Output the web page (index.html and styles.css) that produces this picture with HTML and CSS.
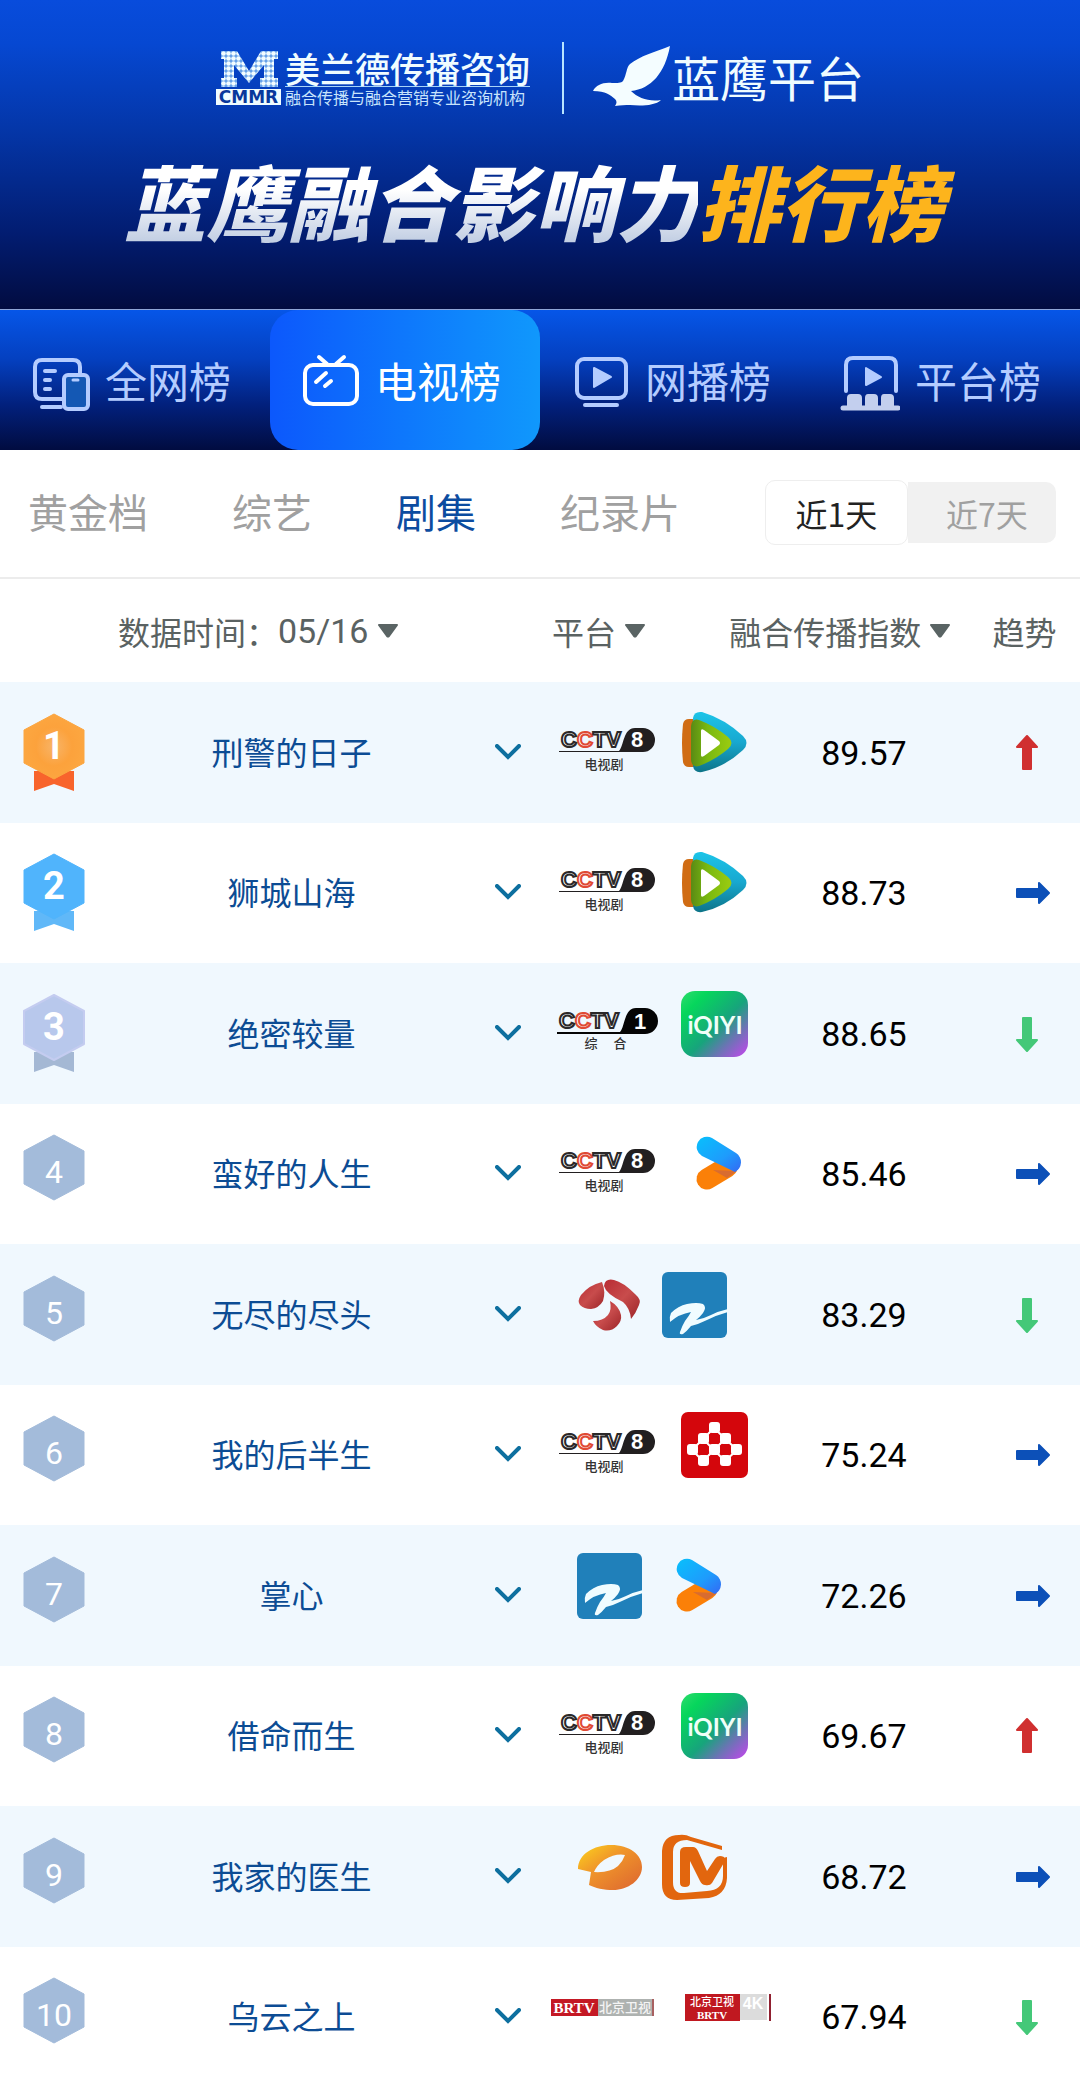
FILE: index.html
```html
<!DOCTYPE html>
<html lang="zh-CN">
<head>
<meta charset="utf-8">
<meta name="viewport" content="width=device-width, initial-scale=1">
<title>蓝鹰融合影响力排行榜</title>
<link rel="stylesheet" href="styles.css">
</head>
<body>
<svg class="defs" width="0" height="0" aria-hidden="true">
  <defs>
    <linearGradient id="g-qiyi" x1="0" y1="0" x2="1" y2="1"><stop offset="0" stop-color="#2fdc6c"/><stop offset=".2" stop-color="#06d65c"/><stop offset=".55" stop-color="#17a47c"/><stop offset=".75" stop-color="#6b74b4"/><stop offset="1" stop-color="#c844f0"/></linearGradient>
    <linearGradient id="g-tx-blue" x1="0" y1="0" x2="0" y2="1"><stop offset="0" stop-color="#1cc4e8"/><stop offset=".5" stop-color="#18a8d0"/><stop offset="1" stop-color="#0d7488"/></linearGradient>
    <linearGradient id="g-tx-green" x1="0" y1="0" x2="1" y2="0"><stop offset="0" stop-color="#5a8a14"/><stop offset=".4" stop-color="#78b810"/><stop offset="1" stop-color="#9ccc10"/></linearGradient>
    <linearGradient id="g-yk-blue" x1="0" y1="0" x2="1" y2="1"><stop offset="0" stop-color="#08c0fc"/><stop offset=".6" stop-color="#1e9cfc"/><stop offset="1" stop-color="#3468f4"/></linearGradient>
    <linearGradient id="g-hunan" x1="0" y1="0" x2="1" y2="1"><stop offset="0" stop-color="#fcd41c"/><stop offset=".4" stop-color="#f0962a"/><stop offset="1" stop-color="#dc6430"/></linearGradient>
    <linearGradient id="g-js" x1="0" y1="0" x2="1" y2="1"><stop offset="0" stop-color="#b82c34"/><stop offset=".5" stop-color="#c84c4c"/><stop offset="1" stop-color="#9c2428"/></linearGradient>
    <radialGradient id="g-gold"><stop offset="0" stop-color="#f8b468"/><stop offset=".6" stop-color="#fca23c"/><stop offset="1" stop-color="#fca640"/></radialGradient>
    <pattern id="dots" width="5" height="5" patternUnits="userSpaceOnUse"><rect width="5" height="5" fill="#5b9ae8"/><circle cx="2.500" cy="2.500" r="2.300" fill="#f2fdff"/></pattern>
  </defs>
  <symbol id="hex" viewBox="0 0 62 80"><path d="M31 1 61 17V50L31 66 1 50V17Z" fill="#a3bbda" stroke="#a3bbda" stroke-linejoin="round"/></symbol>
  <symbol id="chevron" viewBox="0 0 26 16"><path d="M2 2 13 13 24 2" fill="none" stroke="#0d6f9f" stroke-width="4" stroke-linecap="round"/></symbol>
  <symbol id="caret" viewBox="0 0 22 14"><path d="M2 1H20L12 12Q11 13 10 12Z" fill="#5a6464" stroke="#5a6464" stroke-width="2" stroke-linejoin="round"/></symbol>
  <symbol id="up" viewBox="0 0 36 36"><path d="M12 1 22 12H16V34H8V12H2Z" fill="#d03030" stroke="#d03030" stroke-width="2" stroke-linejoin="round"/></symbol>
  <symbol id="down" viewBox="0 0 36 36"><path d="M12 35 2 24H8V2H16V24H22Z" fill="#44c878" stroke="#44c878" stroke-width="2" stroke-linejoin="round"/></symbol>
  <symbol id="flat" viewBox="0 0 36 36"><path d="M34 18 24 8V14H2V22H24V28Z" fill="#0c50b8" stroke="#0c50b8" stroke-width="2" stroke-linejoin="round"/></symbol>
  <symbol id="plate8" viewBox="0 0 106 66"><path d="M2 41H62C67 36 66 18 78 18H86A11.500 11.500 0 0 1 86 42H2Z" fill="#221f20"/></symbol>
  <symbol id="plate1" viewBox="0 0 106 66"><path d="M0 41H63C68 36 67 17 79 17H88A12 12 0 0 1 88 43H0Z" fill="#050505"/></symbol>
  <symbol id="tencent" viewBox="0 0 67 66">
    <path d="M2 14Q3 9 8 9H18V57H8Q3 57 2 52Q0 33 2 14Z" fill="#d06c14"/>
    <path d="M12 8Q13 1 21 2Q44 9 62 26Q69 33 62 40Q44 57 21 62Q13 63 12 56Z" fill="url(#g-tx-blue)"/>
    <path d="M10 16Q11 8 18 10Q34 16 47 27Q54 33 47 39Q34 50 18 56Q11 58 10 50Z" fill="url(#g-tx-green)"/>
    <path d="M20 21Q20 18 23 20L38 31Q40 33 38 35L23 46Q20 48 20 45Z" fill="#fff"/>
  </symbol>
  <symbol id="qiyi-tile" viewBox="0 0 67 66"><rect width="67" height="66" rx="14" fill="url(#g-qiyi)"/></symbol>
  <symbol id="youku" viewBox="0 0 67 66">
    <path d="M26 48 46 36" stroke="#fb8008" stroke-width="21" stroke-linecap="round"/>
    <path d="M32 39 56 40 46 47Z" fill="#d86c30"/>
    <path d="M31 7 55 22A11 11 0 0 1 54 41L21 25A10 10 0 0 1 31 7Z" fill="url(#g-yk-blue)"/>
  </symbol>
  <symbol id="zhejiang" viewBox="0 0 67 66"><rect x="1" width="65" height="66" rx="6" fill="#2080ba"/><path d="M9 50Q8 45 10 41Q17 34 26 32Q36 30 42 32Q46 35 42 41Q39 45 35 48Q42 47 50 43Q58 39 67 37V40Q56 43 46 48Q38 52 30 54Q26 59 22 62Q18 63 19 60Q21 54 24 49Q28 44 30 40Q18 42 9 50Z" fill="#f0fcff"/></symbol>
  <symbol id="jiangsu" viewBox="0 0 67 66" fill="url(#g-js)"><path d="M26 10Q30 20 27 29Q23 36 15 37Q8 37 4 33Q1 29 5 23Q13 13 26 10Z"/><path d="M28 14Q29 6 38 8Q47 10 59 22Q66 28 63 33Q60 41 55 47Q54 36 47 30Q30 22 28 14Z"/><path d="M34 29Q43 34 45 43Q46 49 41 54Q35 60 27 58Q20 55 17 49Q27 49 32 43Q36 38 34 29Z"/></symbol>
  <symbol id="cmgt" viewBox="0 0 67 66"><rect width="67" height="66" rx="7" fill="#d4060c"/><path d="M33 16 11 38 22 49 33 38 22 27M33 16 56 38 44 49 33 38 44 27" stroke="#fff" stroke-width="2" fill="none"/><g fill="#fff"><rect x="28" y="10" width="11" height="11" rx="3"/><rect x="17" y="21" width="11" height="11" rx="3"/><rect x="39" y="21" width="11" height="11" rx="3"/><rect x="6" y="32" width="11" height="11" rx="3"/><rect x="28" y="32" width="11" height="11" rx="3"/><rect x="50" y="32" width="11" height="11" rx="3"/><rect x="17" y="43" width="11" height="11" rx="3"/><rect x="39" y="43" width="11" height="11" rx="3"/></g></symbol>
</svg>

<header class="hero">
  <div class="brands">
    <div class="brand">
      <div class="mark">
        <svg width="65" height="37" viewBox="0 0 65 37" aria-hidden="true"><path d="M5 0H21L33 20 45 0H62V8H58V27H62V36H44V27H48V14L33 32 18 14V27H21V36H5V27H8V8H5Z" fill="url(#dots)"/></svg>
        <span class="mark-name">CMMR</span>
      </div>
      <div class="brand-text">
        <span class="brand-name">美兰德传播咨询</span>
        <span class="brand-sub">融合传播与融合营销专业咨询机构</span>
      </div>
    </div>
    <div class="brand eagle">
      <svg width="77" height="62" viewBox="0 0 77 62" aria-hidden="true"><path d="M77 1C72 28 58 44 38 46C45 53 56 57 68 55C62 61 47 61 37 60C32 60 28 60 22 61Q25 57 22 54C17 50 13 46 0 46C3 40 10 37 19 38C25 38 28 38 30 36C34 29 33 23 37 19C47 11 62 7 77 1Z" fill="#f4fdff"/></svg>
      <span class="eagle-name">蓝鹰平台</span>
    </div>
  </div>
  <h1 class="title"><span class="title-main">蓝鹰融合影响力</span><span class="title-rank">排行榜</span></h1>
</header>

<nav class="boards" aria-label="榜单">
  <a class="board" href="#all"><svg width="60" height="64" viewBox="0 0 60 64" fill="none" stroke="currentColor" stroke-width="4" stroke-linecap="round"><path d="M32 52H12Q5 52 5 45V20Q5 13 12 13H43Q50 13 50 20V26M15 24H25M15 33H20M15 42H20M12 60H31"/><rect x="34" y="28" width="24" height="34" rx="4" fill="#1458b4"/><path d="M43 33H48" stroke-width="3"/></svg>全网榜</a>
  <a class="board active" href="#tv" aria-current="page"><svg width="60" height="64" viewBox="0 0 60 64" fill="none" stroke="currentColor" stroke-width="4" stroke-linecap="round"><rect x="5" y="18" width="52" height="39" rx="8"/><path d="M19 10 27 17M44 10 36 17M26 26 16 35M31 34 25 39"/></svg>电视榜</a>
  <a class="board" href="#web"><svg width="60" height="64" viewBox="0 0 60 64" fill="none" stroke="currentColor" stroke-width="4" stroke-linecap="round"><rect x="7" y="12" width="49" height="39" rx="7"/><path d="M15 58H47"/><path d="M24 21V40L41 30Z" fill="currentColor" stroke-width="2" stroke-linejoin="round"/></svg>网播榜</a>
  <a class="board" href="#platform"><svg width="60" height="64" viewBox="0 0 60 64" fill="none" stroke="currentColor" stroke-width="4" stroke-linecap="round"><path d="M6 44V18Q6 11 13 11H49Q56 11 56 18V44"/><path d="M26 21V38L41 30Z" fill="currentColor" stroke-width="2" stroke-linejoin="round"/><path d="M8 61V51Q8 48 11 48H18Q21 48 21 51V61M26 61V51Q26 48 28 48H34Q37 48 37 51V61M42 61V51Q42 48 44 48H50Q53 48 53 51V61" fill="#c3cfee" stroke="#c3cfee" stroke-width="2"/><path d="M3 61H58" stroke="#c3cfee" stroke-width="5"/></svg>平台榜</a>
</nav>

<div class="filters">
  <nav class="genres" aria-label="类型">
    <a href="#prime">黄金档</a>
    <a href="#variety">综艺</a>
    <a href="#drama" class="active" aria-current="page">剧集</a>
    <a href="#documentary">纪录片</a>
  </nav>
  <div class="range">
    <button type="button" class="active" aria-pressed="true">近1天</button>
    <button type="button" aria-pressed="false">近7天</button>
  </div>
</div>

<table class="ranking">
  <colgroup><col class="c-rank"><col class="c-title"><col class="c-more"><col class="c-platform"><col class="c-index"><col class="c-trend"></colgroup>
  <thead>
    <tr>
      <th colspan="3"><div class="head date"><label for="date">数据时间：</label><select id="date"><option>05/16</option></select><svg width="22" height="14" aria-hidden="true"><use href="#caret"/></svg></div></th>
      <th><button type="button" class="head platform">平台<svg width="22" height="14"><use href="#caret"/></svg></button></th>
      <th><div class="head-end"><button type="button" class="head">融合传播指数<svg width="22" height="14"><use href="#caret"/></svg></button></div></th>
      <th class="trend-head">趋势</th>
    </tr>
  </thead>
  <tbody>
    <tr>
      <td><svg class="rank" width="62" height="80" viewBox="0 0 62 80"><path d="M11 58H51V78L31 71 11 78Z" fill="#f8642c"/><path d="M31 1 61 17V50L31 66 1 50V17Z" fill="url(#g-gold)" stroke="#fca640" stroke-linejoin="round"/><text class="medal" x="31" y="46">1</text></svg></td>
      <td class="name"><a href="#d1">刑警的日子</a></td>
      <td><button type="button" class="more" aria-label="展开"><svg width="26" height="16"><use href="#chevron"/></svg></button></td>
      <td><div class="logos"><svg width="106" height="66"><text class="cctv-word" x="4" y="37">C<tspan class="cctv-red">C</tspan>TV</text><use href="#plate8"/><text class="cctv-num" x="80" y="37">8</text><text class="cctv-name" x="47" y="59">电视剧</text></svg><svg width="67" height="66"><use href="#tencent"/></svg></div></td>
      <td class="index">89.57</td>
      <td class="trend"><svg width="36" height="36" role="img" aria-label="上升"><use href="#up"/></svg></td>
    </tr>
    <tr>
      <td><svg class="rank" width="62" height="80" viewBox="0 0 62 80"><path d="M11 58H51V78L31 71 11 78Z" fill="#60b8f8"/><path d="M31 1 61 17V50L31 66 1 50V17Z" fill="#50b4fc" stroke="#50b4fc" stroke-linejoin="round"/><text class="medal" x="31" y="46">2</text></svg></td>
      <td class="name"><a href="#d2">狮城山海</a></td>
      <td><button type="button" class="more" aria-label="展开"><svg width="26" height="16"><use href="#chevron"/></svg></button></td>
      <td><div class="logos"><svg width="106" height="66"><text class="cctv-word" x="4" y="37">C<tspan class="cctv-red">C</tspan>TV</text><use href="#plate8"/><text class="cctv-num" x="80" y="37">8</text><text class="cctv-name" x="47" y="59">电视剧</text></svg><svg width="67" height="66"><use href="#tencent"/></svg></div></td>
      <td class="index">88.73</td>
      <td class="trend"><svg width="36" height="36" role="img" aria-label="持平"><use href="#flat"/></svg></td>
    </tr>
    <tr>
      <td><svg class="rank" width="62" height="80" viewBox="0 0 62 80"><path d="M11 58H51V78L31 71 11 78Z" fill="#a4b8d4"/><path d="M31 1 61 17V50L31 66 1 50V17Z" fill="#b8c8ec" stroke="#c4ccf0" stroke-width="2" stroke-linejoin="round"/><text class="medal" x="31" y="46">3</text></svg></td>
      <td class="name"><a href="#d3">绝密较量</a></td>
      <td><button type="button" class="more" aria-label="展开"><svg width="26" height="16"><use href="#chevron"/></svg></button></td>
      <td><div class="logos"><svg width="106" height="66"><text class="cctv-word" x="2" y="37">C<tspan class="cctv-red">C</tspan>TV</text><use href="#plate1"/><text class="cctv-num" x="83" y="38">1</text><text class="cctv-name" x="34" y="57">综</text><text class="cctv-name" x="63" y="57">合</text></svg><svg width="67" height="66"><use href="#qiyi-tile"/><text class="qiyi" x="34" y="43">iQIYI</text></svg></div></td>
      <td class="index">88.65</td>
      <td class="trend"><svg width="36" height="36" role="img" aria-label="下降"><use href="#down"/></svg></td>
    </tr>
    <tr>
      <td><svg class="rank" width="62" height="80"><use href="#hex"/><text class="num" x="31" y="49">4</text></svg></td>
      <td class="name"><a href="#d4">蛮好的人生</a></td>
      <td><button type="button" class="more" aria-label="展开"><svg width="26" height="16"><use href="#chevron"/></svg></button></td>
      <td><div class="logos"><svg width="106" height="66"><text class="cctv-word" x="4" y="37">C<tspan class="cctv-red">C</tspan>TV</text><use href="#plate8"/><text class="cctv-num" x="80" y="37">8</text><text class="cctv-name" x="47" y="59">电视剧</text></svg><svg width="67" height="66"><use href="#youku"/></svg></div></td>
      <td class="index">85.46</td>
      <td class="trend"><svg width="36" height="36" role="img" aria-label="持平"><use href="#flat"/></svg></td>
    </tr>
    <tr>
      <td><svg class="rank" width="62" height="80"><use href="#hex"/><text class="num" x="31" y="49">5</text></svg></td>
      <td class="name"><a href="#d5">无尽的尽头</a></td>
      <td><button type="button" class="more" aria-label="展开"><svg width="26" height="16"><use href="#chevron"/></svg></button></td>
      <td><div class="logos"><svg width="67" height="66"><use href="#jiangsu"/></svg><svg width="67" height="66"><use href="#zhejiang"/></svg></div></td>
      <td class="index">83.29</td>
      <td class="trend"><svg width="36" height="36" role="img" aria-label="下降"><use href="#down"/></svg></td>
    </tr>
    <tr>
      <td><svg class="rank" width="62" height="80"><use href="#hex"/><text class="num" x="31" y="49">6</text></svg></td>
      <td class="name"><a href="#d6">我的后半生</a></td>
      <td><button type="button" class="more" aria-label="展开"><svg width="26" height="16"><use href="#chevron"/></svg></button></td>
      <td><div class="logos"><svg width="106" height="66"><text class="cctv-word" x="4" y="37">C<tspan class="cctv-red">C</tspan>TV</text><use href="#plate8"/><text class="cctv-num" x="80" y="37">8</text><text class="cctv-name" x="47" y="59">电视剧</text></svg><svg width="67" height="66"><use href="#cmgt"/></svg></div></td>
      <td class="index">75.24</td>
      <td class="trend"><svg width="36" height="36" role="img" aria-label="持平"><use href="#flat"/></svg></td>
    </tr>
    <tr>
      <td><svg class="rank" width="62" height="80"><use href="#hex"/><text class="num" x="31" y="49">7</text></svg></td>
      <td class="name"><a href="#d7">掌心</a></td>
      <td><button type="button" class="more" aria-label="展开"><svg width="26" height="16"><use href="#chevron"/></svg></button></td>
      <td><div class="logos"><svg width="67" height="66"><use href="#zhejiang"/></svg><svg width="67" height="66"><use href="#youku"/></svg></div></td>
      <td class="index">72.26</td>
      <td class="trend"><svg width="36" height="36" role="img" aria-label="持平"><use href="#flat"/></svg></td>
    </tr>
    <tr>
      <td><svg class="rank" width="62" height="80"><use href="#hex"/><text class="num" x="31" y="49">8</text></svg></td>
      <td class="name"><a href="#d8">借命而生</a></td>
      <td><button type="button" class="more" aria-label="展开"><svg width="26" height="16"><use href="#chevron"/></svg></button></td>
      <td><div class="logos"><svg width="106" height="66"><text class="cctv-word" x="4" y="37">C<tspan class="cctv-red">C</tspan>TV</text><use href="#plate8"/><text class="cctv-num" x="80" y="37">8</text><text class="cctv-name" x="47" y="59">电视剧</text></svg><svg width="67" height="66"><use href="#qiyi-tile"/><text class="qiyi" x="34" y="43">iQIYI</text></svg></div></td>
      <td class="index">69.67</td>
      <td class="trend"><svg width="36" height="36" role="img" aria-label="上升"><use href="#up"/></svg></td>
    </tr>
    <tr>
      <td><svg class="rank" width="62" height="80"><use href="#hex"/><text class="num" x="31" y="49">9</text></svg></td>
      <td class="name"><a href="#d9">我家的医生</a></td>
      <td><button type="button" class="more" aria-label="展开"><svg width="26" height="16"><use href="#chevron"/></svg></button></td>
      <td><div class="logos"><svg width="67" height="66" viewBox="0 0 67 66"><path fill-rule="evenodd" fill="url(#g-hunan)" d="M2 35C2 20 18 11 35 11C54 11 66 21 66 33C66 46 52 56 37 56C28 56 19 54 13 51L15 38ZM18 38Q34 39 42 32Q47 27 49 21Q40 19 28 26Q21 31 18 38Z"/></svg><svg width="67" height="66" viewBox="0 0 67 66"><g fill="#e2660e"><path d="M61 12V16L26 6Q12 6 12 18V48Q12 60 23 59L46 57Q62 56 62 42V24L66 23V44Q65 61 48 64L16 66Q1 66 1 50V17Q2 1 18 1Q24 0 30 3Z"/><path d="M19 18Q19 13 25 13H32Q35 13 37 17L46 37 54 25Q57 20 63 23L64 27 51 49Q49 52 44 51Q41 51 39 47L29 27V49Q29 53 24 53Q19 53 19 49Z"/></g></svg></div></td>
      <td class="index">68.72</td>
      <td class="trend"><svg width="36" height="36" role="img" aria-label="持平"><use href="#flat"/></svg></td>
    </tr>
    <tr>
      <td><svg class="rank" width="62" height="80"><use href="#hex"/><text class="num" x="31" y="49">10</text></svg></td>
      <td class="name"><a href="#d10">乌云之上</a></td>
      <td><button type="button" class="more" aria-label="展开"><svg width="26" height="16"><use href="#chevron"/></svg></button></td>
      <td><div class="logos"><svg width="106" height="66" viewBox="0 0 106 66"><path d="M1 25H48V42H1Z" fill="#c41824"/><path d="M48 25H104V42H48Z" fill="#aeb2b0"/><path d="M102 25H104V42H102Z" fill="#a86060"/><text class="brtv" x="24" y="39">BRTV</text><text class="brtv-cn" x="75" y="38">北京卫视</text></svg><svg width="98" height="66" viewBox="0 0 98 66"><path d="M11 20H66V47H11Z" fill="#c01820"/><path d="M66 20H93V46H66Z" fill="#dcdcdc"/><path d="M95 20H97V47H95Z" fill="#902030"/><text class="brtv-top" x="38" y="32">北京卫视</text><text class="brtv-sm" x="38" y="45">BRTV</text><text class="fourk" x="79" y="35">4K</text></svg></div></td>
      <td class="index">67.94</td>
      <td class="trend"><svg width="36" height="36" role="img" aria-label="下降"><use href="#down"/></svg></td>
    </tr>
  </tbody>
</table>
</body>
</html>
```
FILE: styles.css
```css
* { box-sizing: border-box; }

body {
  margin: 0;
  padding-bottom: 8px;
  background: #fff;
  color: #000;
  font-family: Roboto, "Noto Sans CJK SC", sans-serif;
  font-size: 32px;
}

a { color: inherit; text-decoration: none; }

button, select {
  margin: 0;
  padding: 0;
  border: 0;
  background: none;
  color: inherit;
  font: inherit;
}

svg { display: block; flex: none; }
.defs { position: absolute; }

/* Banner */
.hero {
  display: flex;
  flex-direction: column;
  align-items: center;
  height: 310px;
  padding-top: 42px;
  border-bottom: 1px solid #8fa6d8;
  background: linear-gradient(#084cdc, #0648d2 14%, #0436a8 42%, #021c70 76%, #020c40);
  color: #f0fcff;
}

.brands { display: flex; height: 72px; }
.brand { display: flex; align-items: center; gap: 4px; padding-right: 32px; }
.brand.eagle { gap: 2px; padding: 0 0 4px 29px; border-left: 2px solid #b8e4ff; }

.mark { display: flex; flex-direction: column; gap: 1px; }
.mark-name {
  background: #f0fcff;
  color: #08389c;
  font: bold 17px/16px "DejaVu Sans", sans-serif;
  text-align: center;
}

.brand-text { display: flex; flex-direction: column; font-family: "Noto Sans CJK SC", sans-serif; }
.brand-name { border-bottom: 1px solid #a8d4f8; font-size: 35px; font-weight: 500; line-height: 37px; }
.brand-sub { color: #c8e4fc; font-size: 16px; line-height: 20px; }
.eagle-name { font: 48px/60px "Noto Sans CJK SC", sans-serif; }

.title {
  display: flex;
  margin: 36px 0 0;
  padding-right: 12px;
  font: italic 900 82px/100px "Noto Sans CJK SC", sans-serif;
}
.title-main {
  background: linear-gradient(#fff 40%, #c4d0e4 90%);
  background-clip: text;
  -webkit-background-clip: text;
  color: transparent;
}
.title-rank { color: #fdb41c; }

/* Board tabs */
.boards {
  display: grid;
  grid-template-columns: repeat(4, 1fr);
  height: 140px;
  background: linear-gradient(#0656e8, #0440c0 35%, #02207c 68%, #010c40);
  color: #b4ccff;
}
.board {
  display: flex;
  align-items: center;
  gap: 15px;
  padding: 0 0 2px 30px;
  font-size: 42px;
  white-space: nowrap;
}
.board.active {
  border-radius: 28px;
  background: linear-gradient(90deg, #0c58fc, #1098fc);
  color: #fff;
}

/* Genre and time range filters */
.filters {
  display: flex;
  justify-content: space-between;
  align-items: center;
  height: 129px;
  padding: 0 24px 2px 28px;
  border-bottom: 2px solid #ececec;
}
.genres { display: flex; gap: 84px; padding-bottom: 4px; color: #a0a0a0; font-size: 40px; white-space: nowrap; }
.genres .active { color: #0c4ca0; }

.range { display: flex; align-items: center; font-family: "Noto Sans CJK SC", sans-serif; }
.range button {
  width: 148px;
  height: 61px;
  padding-left: 10px;
  border-radius: 0 10px 10px 0;
  background: #f1f1f1;
  color: #a0a0a0;
}
.range .active {
  width: 143px;
  height: 65px;
  padding: 0;
  border: 1px solid #eee;
  border-radius: 10px;
  background: #fff;
  color: #222;
}

/* Ranking table */
.ranking { width: 100%; border-collapse: collapse; table-layout: fixed; }
.c-rank { width: 10%; }
.c-title { width: 34%; }
.c-more { width: 6%; }
.c-platform { width: 21%; }
.c-index { width: 18%; }
.c-trend { width: 11%; }

.ranking th, .ranking td { padding: 0; text-align: center; vertical-align: middle; }
.ranking th { height: 103px; color: #5a6262; font-weight: 400; white-space: nowrap; }
.head { display: inline-flex; align-items: center; gap: 8px; white-space: nowrap; }
.head.date { display: flex; padding-left: 118px; }
.date label { margin-right: -8px; }
.date select { appearance: none; font-size: 34px; }
.head.platform { display: flex; padding-left: 12px; }
.head-end { display: flex; justify-content: flex-end; padding-right: 10px; }
.ranking .trend-head { padding-left: 8px; }

.ranking tbody tr { height: 140px; color: #0c4c94; }
.ranking tbody tr:nth-child(odd) { height: 141px; background: #f0f8fe; }
.rank { margin: 0 auto; }
.ranking .name { padding-bottom: 4px; }
.more { display: block; margin: 0 auto; padding: 8px 8px 10px; }
.logos { display: flex; justify-content: safe center; gap: 18px; padding: 0 12px 20px 10px; }
.ranking .index { color: #000; font-size: 34px; }
.ranking .trend { padding-left: 54px; }

/* Text inside badges and channel logos */
.rank text { fill: #fff; text-anchor: middle; }
.num { font-size: 32px; }
.medal { font-size: 38px; font-weight: 700; }
.cctv-word { fill: #fff; stroke: #2a2829; stroke-width: 2px; font: bold 22px "Liberation Sans", sans-serif; }
.cctv-red { stroke: #e04a34; }
.cctv-num { fill: #fff; font: bold 22px "Liberation Sans", sans-serif; text-anchor: middle; }
.cctv-name { fill: #333; font: 500 13px "Noto Sans CJK SC", sans-serif; text-anchor: middle; }
.qiyi { fill: #f0fff8; font: bold 24px Lato, sans-serif; text-anchor: middle; }
.brtv { fill: #fff; font: bold 15px "Liberation Serif", serif; text-anchor: middle; }
.brtv-cn { fill: #f4f4f4; font: 500 13px "Noto Sans CJK SC", sans-serif; text-anchor: middle; }
.brtv-top { fill: #fff; font: 500 11px "Noto Sans CJK SC", sans-serif; text-anchor: middle; }
.brtv-sm { fill: #fff; font: bold 11px "Liberation Serif", serif; text-anchor: middle; }
.fourk { fill: #fff; font: bold 16px "Liberation Sans", sans-serif; text-anchor: middle; }
```
